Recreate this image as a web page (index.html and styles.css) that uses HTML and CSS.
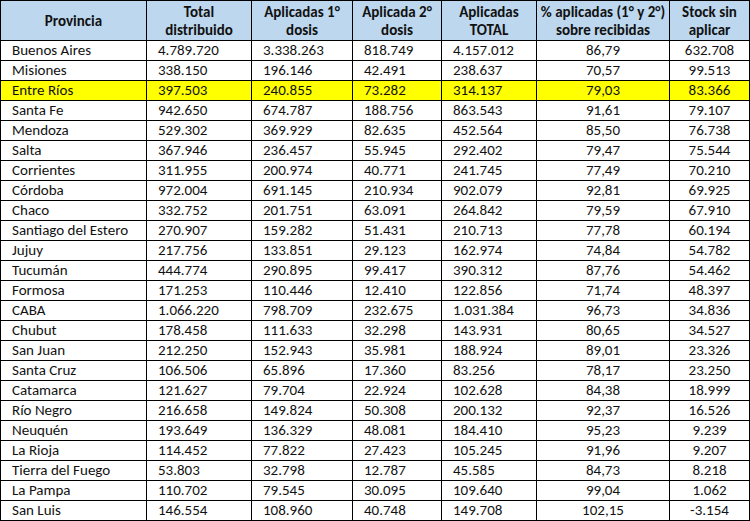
FILE: index.html
```html
<!DOCTYPE html>
<html lang="es">
<head>
<meta charset="utf-8">
<title>Vacunas por provincia</title>
<link rel="stylesheet" href="styles.css">
</head>
<body>
<table class="sheet">
  <colgroup>
    <col class="c1"><col class="c2"><col class="c3"><col class="c4"><col class="c5"><col class="c6"><col class="c7">
  </colgroup>
  <thead>
    <tr>
      <th>Provincia</th>
      <th>Total<br>distribuido</th>
      <th>Aplicadas 1°<br>dosis</th>
      <th>Aplicada 2°<br>dosis</th>
      <th>Aplicadas<br>TOTAL</th>
      <th>% aplicadas (1° y 2°)<br>sobre recibidas</th>
      <th>Stock sin<br>aplicar</th>
    </tr>
  </thead>
  <tbody>
    <tr><td>Buenos Aires</td><td>4.789.720</td><td>3.338.263</td><td>818.749</td><td>4.157.012</td><td class="ctr">86,79</td><td class="ctr">632.708</td></tr>
    <tr><td>Misiones</td><td>338.150</td><td>196.146</td><td>42.491</td><td>238.637</td><td class="ctr">70,57</td><td class="ctr">99.513</td></tr>
    <tr class="hl"><td>Entre Ríos</td><td>397.503</td><td>240.855</td><td>73.282</td><td>314.137</td><td class="ctr">79,03</td><td class="ctr">83.366</td></tr>
    <tr><td>Santa Fe</td><td>942.650</td><td>674.787</td><td>188.756</td><td>863.543</td><td class="ctr">91,61</td><td class="ctr">79.107</td></tr>
    <tr><td>Mendoza</td><td>529.302</td><td>369.929</td><td>82.635</td><td>452.564</td><td class="ctr">85,50</td><td class="ctr">76.738</td></tr>
    <tr><td>Salta</td><td>367.946</td><td>236.457</td><td>55.945</td><td>292.402</td><td class="ctr">79,47</td><td class="ctr">75.544</td></tr>
    <tr><td>Corrientes</td><td>311.955</td><td>200.974</td><td>40.771</td><td>241.745</td><td class="ctr">77,49</td><td class="ctr">70.210</td></tr>
    <tr><td>Córdoba</td><td>972.004</td><td>691.145</td><td>210.934</td><td>902.079</td><td class="ctr">92,81</td><td class="ctr">69.925</td></tr>
    <tr><td>Chaco</td><td>332.752</td><td>201.751</td><td>63.091</td><td>264.842</td><td class="ctr">79,59</td><td class="ctr">67.910</td></tr>
    <tr><td>Santiago del Estero</td><td>270.907</td><td>159.282</td><td>51.431</td><td>210.713</td><td class="ctr">77,78</td><td class="ctr">60.194</td></tr>
    <tr><td>Jujuy</td><td>217.756</td><td>133.851</td><td>29.123</td><td>162.974</td><td class="ctr">74,84</td><td class="ctr">54.782</td></tr>
    <tr><td>Tucumán</td><td>444.774</td><td>290.895</td><td>99.417</td><td>390.312</td><td class="ctr">87,76</td><td class="ctr">54.462</td></tr>
    <tr><td>Formosa</td><td>171.253</td><td>110.446</td><td>12.410</td><td>122.856</td><td class="ctr">71,74</td><td class="ctr">48.397</td></tr>
    <tr><td>CABA</td><td>1.066.220</td><td>798.709</td><td>232.675</td><td>1.031.384</td><td class="ctr">96,73</td><td class="ctr">34.836</td></tr>
    <tr><td>Chubut</td><td>178.458</td><td>111.633</td><td>32.298</td><td>143.931</td><td class="ctr">80,65</td><td class="ctr">34.527</td></tr>
    <tr><td>San Juan</td><td>212.250</td><td>152.943</td><td>35.981</td><td>188.924</td><td class="ctr">89,01</td><td class="ctr">23.326</td></tr>
    <tr><td>Santa Cruz</td><td>106.506</td><td>65.896</td><td>17.360</td><td>83.256</td><td class="ctr">78,17</td><td class="ctr">23.250</td></tr>
    <tr><td>Catamarca</td><td>121.627</td><td>79.704</td><td>22.924</td><td>102.628</td><td class="ctr">84,38</td><td class="ctr">18.999</td></tr>
    <tr><td>Río Negro</td><td>216.658</td><td>149.824</td><td>50.308</td><td>200.132</td><td class="ctr">92,37</td><td class="ctr">16.526</td></tr>
    <tr><td>Neuquén</td><td>193.649</td><td>136.329</td><td>48.081</td><td>184.410</td><td class="ctr">95,23</td><td class="ctr">9.239</td></tr>
    <tr><td>La Rioja</td><td>114.452</td><td>77.822</td><td>27.423</td><td>105.245</td><td class="ctr">91,96</td><td class="ctr">9.207</td></tr>
    <tr><td>Tierra del Fuego</td><td>53.803</td><td>32.798</td><td>12.787</td><td>45.585</td><td class="ctr">84,73</td><td class="ctr">8.218</td></tr>
    <tr><td>La Pampa</td><td>110.702</td><td>79.545</td><td>30.095</td><td>109.640</td><td class="ctr">99,04</td><td class="ctr">1.062</td></tr>
    <tr><td>San Luis</td><td>146.554</td><td>108.960</td><td>40.748</td><td>149.708</td><td class="ctr">102,15</td><td class="ctr">-3.154</td></tr>
  </tbody>
</table>
</body>
</html>
```

FILE: styles.css
```css
html, body {
  margin: 0;
  padding: 0;
  background: #ffffff;
}

.sheet {
  width: 750px;
  table-layout: fixed;
  border-collapse: separate;
  border-spacing: 1px;
  background: #000000;
  font-family: Carlito, Lato, "Liberation Sans", sans-serif;
  font-size: 15px;
  color: #111111;
}

.c1 { width: 145px; }
.c2 { width: 104px; }
.c3 { width: 100px; }
.c4 { width: 88px; }
.c5 { width: 94px; }
.c6 { width: 132px; }
.c7 { width: 79px; }

.sheet th {
  background: #bdd7ee;
  height: 39px;
  padding: 0;
  font-weight: bold;
  line-height: 18px;
  text-align: center;
  vertical-align: middle;
}

.sheet td {
  background: #ffffff;
  height: 19px;
  padding: 0 0 0 11px;
  line-height: 19px;
  text-align: left;
  white-space: nowrap;
  overflow: hidden;
}

.sheet td.ctr {
  padding: 0;
  text-align: center;
}

.sheet tr.hl td {
  background: #ffff00;
}
```
